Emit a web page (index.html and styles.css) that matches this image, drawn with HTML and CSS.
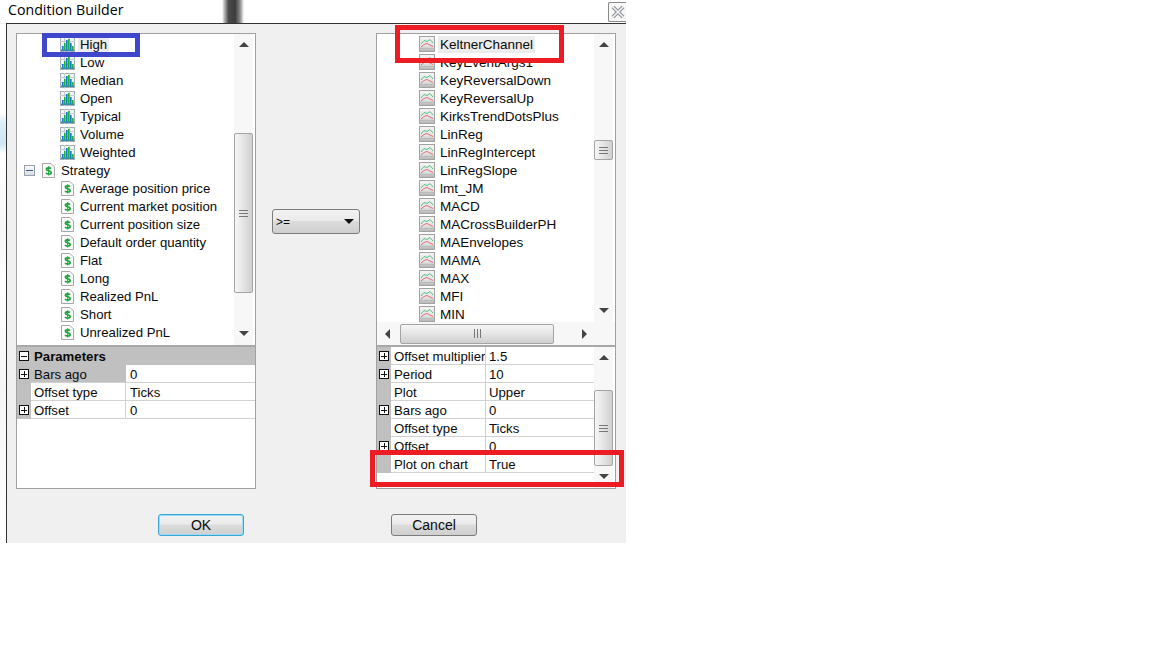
FILE: index.html
```html
<!DOCTYPE html>
<html lang="en">
<head>
<meta charset="utf-8">
<title>Condition Builder</title>
<link rel="stylesheet" href="styles.css">
</head>
<body>
<svg class="defs" width="0" height="0" aria-hidden="true">
  <symbol id="chart" viewBox="0 0 15 15">
    <rect x="0.5" y="0.5" width="14" height="14" fill="#f0f4f5" stroke="#a4aeb2"/>
    <path d="M0 4.5h15M0 9.5h15M4.5 0v15M9.5 0v15" stroke="#c4cdd0" stroke-width="1"/>
    <rect x="2" y="9" width="1.6" height="5" fill="#2070d8"/>
    <rect x="4" y="6" width="1.6" height="8" fill="#18b530"/>
    <rect x="6" y="3" width="1.6" height="11" fill="#2070d8"/>
    <rect x="8" y="2" width="1.6" height="12" fill="#18b530"/>
    <rect x="10" y="6" width="1.6" height="8" fill="#2070d8"/>
    <rect x="12" y="9" width="1.6" height="5" fill="#18b530"/>
    <rect x="1" y="12.5" width="13" height="1.5" fill="#2f8fb0"/>
  </symbol>
  <symbol id="line" viewBox="0 0 16 16">
    <defs>
      <linearGradient id="lineBg" x1="0" y1="0" x2="0" y2="1">
        <stop offset="0" stop-color="#f4f4f4"/>
        <stop offset="0.6" stop-color="#e4e4e4"/>
        <stop offset="1" stop-color="#b4b4b4"/>
      </linearGradient>
    </defs>
    <rect x="0.5" y="0.5" width="15" height="15" fill="url(#lineBg)" stroke="#a2a2a2"/>
    <path d="M1 12.5h14M1 14.5h14" stroke="#bcbcbc"/>
    <path d="M2 8L5 4.5L8 5.5L11 3.5L14 7" fill="none" stroke="#45bb78" stroke-width="0.9"/>
    <path d="M2 11L5 8.5L8 7.5L11 9L14 10.5" fill="none" stroke="#e2606a" stroke-width="0.9"/>
  </symbol>
  <symbol id="dollar" viewBox="0 0 13 15">
    <path d="M0.5 0.5H9L12.5 4V14.5H0.5Z" fill="#fafafa" stroke="#a8a8a8"/>
    <path d="M9 5.6C8.2 4.6 4.4 4.3 4.4 6.2C4.4 8.2 9.2 7.4 9.2 9.5C9.2 11.5 5 11.2 4 10.2" fill="none" stroke="#1fa53c" stroke-width="1.7"/>
    <path d="M6.7 3.2V12.6" stroke="#1fa53c" stroke-width="1.2"/>
  </symbol>
</svg>

<div class="window">
  <header class="titlebar">
    <span class="title">Condition Builder</span>
    <span class="close"><svg width="14" height="14" viewBox="0 0 14 14"><path d="M2 2L12 12M12 2L2 12" stroke="#8a8f96" stroke-width="3.8"/><path d="M2 2L12 12M12 2L2 12" stroke="#f4f4f4" stroke-width="1.6"/></svg></span>
  </header>
  <main class="client">
    <div class="columns">
      <section class="panel">
        <div class="pane tree-pane">
          <div class="tree">
            <div class="node leaf sel"><svg class="ic-chart"><use href="#chart"/></svg><span class="lbl">High</span></div>
            <div class="node leaf"><svg class="ic-chart"><use href="#chart"/></svg><span class="lbl">Low</span></div>
            <div class="node leaf"><svg class="ic-chart"><use href="#chart"/></svg><span class="lbl">Median</span></div>
            <div class="node leaf"><svg class="ic-chart"><use href="#chart"/></svg><span class="lbl">Open</span></div>
            <div class="node leaf"><svg class="ic-chart"><use href="#chart"/></svg><span class="lbl">Typical</span></div>
            <div class="node leaf"><svg class="ic-chart"><use href="#chart"/></svg><span class="lbl">Volume</span></div>
            <div class="node leaf"><svg class="ic-chart"><use href="#chart"/></svg><span class="lbl">Weighted</span></div>
            <div class="node group"><span class="toggle"></span><svg class="ic-dollar"><use href="#dollar"/></svg><span class="lbl">Strategy</span></div>
            <div class="node leaf"><svg class="ic-dollar"><use href="#dollar"/></svg><span class="lbl">Average position price</span></div>
            <div class="node leaf"><svg class="ic-dollar"><use href="#dollar"/></svg><span class="lbl">Current market position</span></div>
            <div class="node leaf"><svg class="ic-dollar"><use href="#dollar"/></svg><span class="lbl">Current position size</span></div>
            <div class="node leaf"><svg class="ic-dollar"><use href="#dollar"/></svg><span class="lbl">Default order quantity</span></div>
            <div class="node leaf"><svg class="ic-dollar"><use href="#dollar"/></svg><span class="lbl">Flat</span></div>
            <div class="node leaf"><svg class="ic-dollar"><use href="#dollar"/></svg><span class="lbl">Long</span></div>
            <div class="node leaf"><svg class="ic-dollar"><use href="#dollar"/></svg><span class="lbl">Realized PnL</span></div>
            <div class="node leaf"><svg class="ic-dollar"><use href="#dollar"/></svg><span class="lbl">Short</span></div>
            <div class="node leaf"><svg class="ic-dollar"><use href="#dollar"/></svg><span class="lbl">Unrealized PnL</span></div>
          </div>
          <div class="vscroll vs-left-tree">
            <span class="arr up"></span>
            <span class="thumb"><i class="grip"></i></span>
            <span class="arr down"></span>
          </div>
        </div>
        <div class="props props-left">
          <div class="props-head"><span class="box minus"></span><b>Parameters</b></div>
          <div class="row active"><span class="gut"><span class="box plus"></span></span><span class="name">Bars ago</span><span class="val">0</span></div>
          <div class="row"><span class="gut"></span><span class="name">Offset type</span><span class="val">Ticks</span></div>
          <div class="row"><span class="gut"><span class="box plus"></span></span><span class="name">Offset</span><span class="val">0</span></div>
        </div>
      </section>

      <div class="middle">
        <div class="combo"><span>&gt;=</span><i class="caret"></i></div>
      </div>

      <section class="panel">
        <div class="pane tree-pane right-tree">
          <div class="tree-wrap">
            <div class="tree tree-r">
              <div class="node leaf sel"><svg class="ic-line"><use href="#line"/></svg><span class="lbl">KeltnerChannel</span></div>
              <div class="node leaf"><svg class="ic-line"><use href="#line"/></svg><span class="lbl">KeyEventArgs1</span></div>
              <div class="node leaf"><svg class="ic-line"><use href="#line"/></svg><span class="lbl">KeyReversalDown</span></div>
              <div class="node leaf"><svg class="ic-line"><use href="#line"/></svg><span class="lbl">KeyReversalUp</span></div>
              <div class="node leaf"><svg class="ic-line"><use href="#line"/></svg><span class="lbl">KirksTrendDotsPlus</span></div>
              <div class="node leaf"><svg class="ic-line"><use href="#line"/></svg><span class="lbl">LinReg</span></div>
              <div class="node leaf"><svg class="ic-line"><use href="#line"/></svg><span class="lbl">LinRegIntercept</span></div>
              <div class="node leaf"><svg class="ic-line"><use href="#line"/></svg><span class="lbl">LinRegSlope</span></div>
              <div class="node leaf"><svg class="ic-line"><use href="#line"/></svg><span class="lbl">lmt_JM</span></div>
              <div class="node leaf"><svg class="ic-line"><use href="#line"/></svg><span class="lbl">MACD</span></div>
              <div class="node leaf"><svg class="ic-line"><use href="#line"/></svg><span class="lbl">MACrossBuilderPH</span></div>
              <div class="node leaf"><svg class="ic-line"><use href="#line"/></svg><span class="lbl">MAEnvelopes</span></div>
              <div class="node leaf"><svg class="ic-line"><use href="#line"/></svg><span class="lbl">MAMA</span></div>
              <div class="node leaf"><svg class="ic-line"><use href="#line"/></svg><span class="lbl">MAX</span></div>
              <div class="node leaf"><svg class="ic-line"><use href="#line"/></svg><span class="lbl">MFI</span></div>
              <div class="node leaf"><svg class="ic-line"><use href="#line"/></svg><span class="lbl">MIN</span></div>
            </div>
            <div class="vscroll vs-right-tree">
              <span class="arr up"></span>
              <span class="thumb"><i class="grip"></i></span>
              <span class="arr down"></span>
            </div>
          </div>
          <div class="hscroll">
            <span class="arr left"></span>
            <span class="hthumb"><i class="hgrip"></i></span>
            <span class="arr right"></span>
          </div>
        </div>
        <div class="props props-right">
          <div class="rows">
            <div class="row"><span class="gut"><span class="box plus"></span></span><span class="name">Offset multiplier</span><span class="val">1.5</span></div>
            <div class="row"><span class="gut"><span class="box plus"></span></span><span class="name">Period</span><span class="val">10</span></div>
            <div class="row"><span class="gut"></span><span class="name">Plot</span><span class="val">Upper</span></div>
            <div class="row"><span class="gut"><span class="box plus"></span></span><span class="name">Bars ago</span><span class="val">0</span></div>
            <div class="row"><span class="gut"></span><span class="name">Offset type</span><span class="val">Ticks</span></div>
            <div class="row"><span class="gut"><span class="box plus"></span></span><span class="name">Offset</span><span class="val">0</span></div>
            <div class="row"><span class="gut"></span><span class="name">Plot on chart</span><span class="val">True</span></div>
          </div>
          <div class="vscroll vs-props">
            <span class="arr up"></span>
            <span class="thumb"><i class="grip"></i></span>
            <span class="arr down"></span>
          </div>
        </div>
      </section>
    </div>
    <div class="actions">
      <button class="btn default">OK</button>
      <button class="btn">Cancel</button>
    </div>
  </main>
  <div class="smear"></div>
  <div class="edge"></div>
  <div class="mark mark-blue"></div>
  <div class="mark mark-red-top"></div>
  <div class="mark mark-red-bottom"></div>
</div>
</body>
</html>
```

FILE: styles.css
```css
* { box-sizing: border-box; }
html, body { margin: 0; padding: 0; background: #fff; }
body { width: 1152px; height: 648px; overflow: hidden; font-family: "Liberation Sans", Arial, sans-serif; font-size: 13.2px; color: #0a0a0a; }
.defs { position: absolute; }

.window { position: relative; width: 626px; height: 543px; background: #f0f0f0; overflow: hidden; }
.smear { position: absolute; left: 222px; top: 0; width: 22px; height: 23px; background: linear-gradient(90deg, #fff 0, #b0b0b0 12%, #4a4a4a 30%, #3c3c3c 60%, #8a8a8a 82%, #fff 100%); }
.edge { position: absolute; left: 0; top: 24px; width: 6px; height: 519px; background: linear-gradient(180deg, #fff 0, #fff 17%, #dceef7 19%, #cfe6f3 23%, #fff 25%, #f6f6f6 40%, #fff 50%, #f5f5f5 70%, #fff 100%); }

.titlebar { position: relative; height: 23px; background: #fff; display: flex; align-items: center; justify-content: space-between; padding: 0 0 5px 8px; }
.title { font-family: "Open Sans", sans-serif; font-size: 14.2px; color: #000; }
.close { width: 18px; height: 20px; margin: 5px 0 0; border: 1px solid #8a8a8a; border-right: 0; border-radius: 2px 0 0 2px; background: #f7f7f7; display: flex; align-items: center; justify-content: center; }

.client { position: relative; margin-left: 6px; height: 520px; border-left: 1px solid #333; border-top: 1px solid #333; padding: 9px 10px 0 9px; }
.columns { display: flex; gap: 16px; height: 456px; }
.panel { width: 240px; height: 456px; display: flex; flex-direction: column; }
.middle { width: 88px; padding-top: 176px; }

.pane { height: 312px; background: #fff; border: 1px solid #a0a0a0; border-bottom: 0; display: flex; overflow: hidden; }
.tree { flex: 1; padding-top: 1px; min-width: 0; overflow: hidden; }
.node { height: 18px; display: flex; align-items: center; white-space: nowrap; }
.leaf { padding-left: 43px; }
.group { padding-left: 7px; }
.lbl { padding: 0 2px; margin-left: 4px; line-height: 17px; }
.ic-chart + .lbl { margin-left: 3px; }
.sel .lbl { background: #ececec; }
.ic-chart { width: 15px; height: 15px; flex: none; }
.ic-dollar { width: 13px; height: 15px; flex: none; margin-left: 1px; }
.group .ic-dollar { margin-left: 7px; }
.ic-line { width: 16px; height: 16px; flex: none; }
.toggle { width: 11px; height: 11px; flex: none; border: 1px solid #9aa0a8; background: linear-gradient(#3a5a80, #3a5a80) center / 7px 1px no-repeat, linear-gradient(#fafafa, #d8dde2); }

.right-tree { flex-direction: column; }
.tree-wrap { height: 288px; display: flex; }
.tree-r { font-size: 13.5px; }
.tree-r .leaf { padding-left: 42px; }
.tree-r .lbl { margin-left: 3px; }

.vscroll { width: 19px; margin-right: 2px; flex: none; background: #f7f7f7; display: flex; flex-direction: column; align-items: center; position: relative; }
.arr { width: 0; height: 0; border: 5px solid transparent; flex: none; }
.arr.up { border-top: 0; border-bottom: 5px solid #444; margin-top: 8px; }
.arr.down { border-bottom: 0; border-top: 5px solid #444; margin-top: auto; margin-bottom: 9px; }
.arr.left { border-left: 0; border-right: 5px solid #444; margin-left: 8px; }
.arr.right { border-right: 0; border-left: 5px solid #444; margin-left: auto; margin-right: 28px; }
.thumb { width: 19px; flex: none; border: 1px solid #a4a4a4; border-radius: 2px; background: linear-gradient(90deg, #f6f6f6, #e6e6e6 45%, #cfcfcf); display: flex; align-items: center; justify-content: center; }
.grip { width: 9px; height: 7px; border-top: 1px solid #777; border-bottom: 1px solid #777; background: linear-gradient(#777, #777) center / 100% 1px no-repeat; }
.vs-left-tree .thumb { margin-top: 86px; height: 160px; }
.vs-right-tree .thumb { margin-top: 93px; height: 20px; }
.vs-props .thumb { margin-top: 30px; height: 76px; }

.hscroll { height: 23px; flex: none; background: #f7f7f7; display: flex; align-items: center; }
.hthumb { width: 154px; height: 20px; margin-left: 10px; border: 1px solid #a4a4a4; border-radius: 2px; background: linear-gradient(180deg, #f6f6f6, #e6e6e6 45%, #cfcfcf); display: flex; align-items: center; justify-content: center; }
.hgrip { width: 7px; height: 9px; border-left: 1px solid #777; border-right: 1px solid #777; background: linear-gradient(#777, #777) center / 1px 100% no-repeat; }

.props { height: 144px; background: #fff; border: 1px solid #a0a0a0; border-top: 2px solid #a8a8a8; }
.props-head { height: 18px; background: #c0c0c0; display: flex; align-items: center; padding-left: 2px; gap: 5px; }
.box { width: 10px; height: 10px; display: block; flex: none; border: 1px solid #111; background: linear-gradient(#111, #111) center / 6px 1px no-repeat, #fff; }
.box.plus { background: linear-gradient(#111, #111) center / 6px 1px no-repeat, linear-gradient(#111, #111) center / 1px 6px no-repeat, #fff; }
.row { height: 18px; display: grid; grid-template-columns: 14px 95px 1fr; border-bottom: 1px solid #d2d2d2; }
.gut { background: #c0c0c0; display: flex; align-items: center; padding-left: 2px; margin-bottom: -1px; }
.name { padding: 0 0 0 3px; height: 17px; line-height: 19px; overflow: hidden; white-space: nowrap; border-right: 1px solid #d2d2d2; }
.val { padding-left: 3px; height: 17px; line-height: 19px; white-space: nowrap; overflow: hidden; }
.props-left .val { padding-left: 4px; }
.active .name { background: #c0c0c0; border-right-color: #c0c0c0; }

.props-right { display: flex; }
.rows { flex: 1; min-width: 0; }

.combo { width: 88px; height: 25px; border: 1px solid #7c7c7c; border-radius: 3px; background: linear-gradient(#f2f2f2 0, #ebebeb 45%, #dcdcdc 50%, #cfcfcf 100%); display: flex; align-items: center; justify-content: space-between; padding: 0 5px 0 3px; font-size: 12px; }
.caret { width: 0; height: 0; border: 5px solid transparent; border-bottom: 0; border-top: 5px solid #111; }

.actions { display: flex; gap: 147px; padding: 25px 0 0 142px; }
.btn { width: 86px; height: 22px; padding: 0; font: inherit; font-size: 14px; color: #0a0a0a; border: 1px solid #7c7c7c; border-radius: 3px; background: linear-gradient(#f2f2f2 0, #ebebeb 45%, #dcdcdc 50%, #cfcfcf 100%); }
.btn.default { border-color: #3aa6d8; box-shadow: inset 0 0 0 1px #9bdcf5; }

.mark { position: absolute; pointer-events: none; }
.mark-blue { left: 42px; top: 33px; width: 98px; height: 24px; border: 5px solid #3f48cc; }
.mark-red-top { left: 395px; top: 25px; width: 169px; height: 38px; border: 5px solid #ed1c24; }
.mark-red-bottom { left: 370px; top: 450px; width: 254px; height: 37px; border: 5px solid #ed1c24; }
```
